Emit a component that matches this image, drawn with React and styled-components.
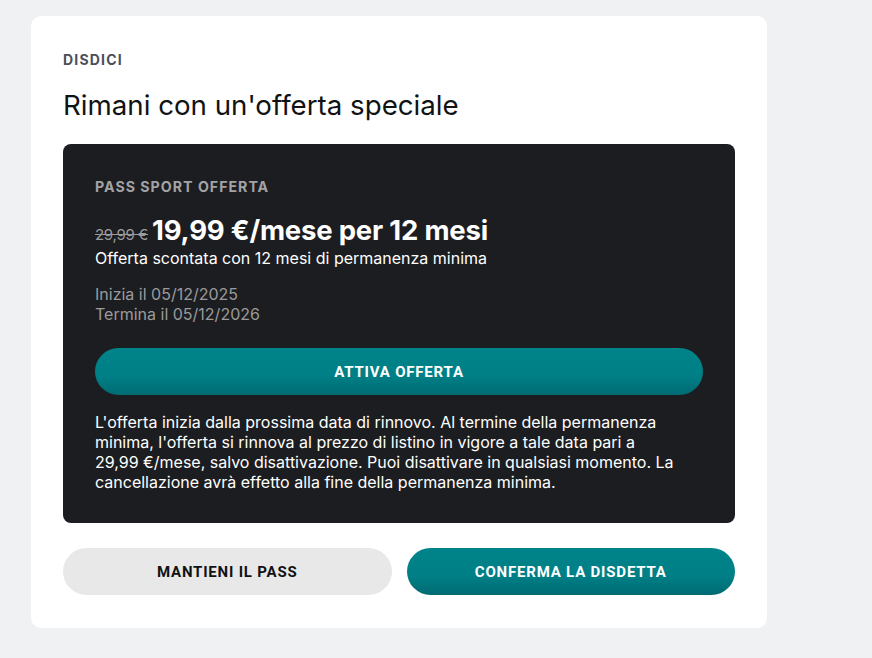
import React from "react";
import styled, { createGlobalStyle } from "styled-components";

const GlobalStyle = createGlobalStyle`
  html, body {
    margin: 0;
    padding: 0;
    background: #f0f1f3;
    font-family: Inter, "Noto Sans", Roboto, sans-serif;
  }
`;

const App = () => {
    return (
        <>
            <GlobalStyle />
            <StPage>
                <StCard>
                    <StEyebrow>DISDICI</StEyebrow>
                    <StTitle>Rimani con un'offerta speciale</StTitle>

                    <StOfferBox>
                        <StOfferLabel>PASS SPORT OFFERTA</StOfferLabel>
                        <StPriceRow>
                            <StOldPrice>29,99 €</StOldPrice>
                            <StNewPrice>19,99 €/mese per 12 mesi</StNewPrice>
                        </StPriceRow>
                        <StSubtitle>Offerta scontata con 12 mesi di permanenza minima</StSubtitle>

                        <StDates>
                            <div>Inizia il 05/12/2025</div>
                            <div>Termina il 05/12/2026</div>
                        </StDates>

                        <StBtn>ATTIVA OFFERTA</StBtn>

                        <StNote>
                            L'offerta inizia dalla prossima data di rinnovo. Al termine della permanenza
                            minima, l'offerta si rinnova al prezzo di listino in vigore a tale data pari a{" "}
                            <StNoWrap>29,99 €/mese,</StNoWrap> salvo disattivazione. Puoi disattivare in qualsiasi momento. La
                            cancellazione avrà effetto alla fine della permanenza minima.
                        </StNote>
                    </StOfferBox>

                    <StBtnRow>
                        <StBtn $variant="grey">MANTIENI IL PASS</StBtn>
                        <StBtn>CONFERMA LA DISDETTA</StBtn>
                    </StBtnRow>
                </StCard>
            </StPage>
        </>
    );
};

export default App;

// pagina
const StPage = styled.div`
  padding: 16px 31px;
  min-height: 658px;
  box-sizing: border-box;
`;

// card bianca
const StCard = styled.div`
  width: 736px;
  box-sizing: border-box;
  background: #ffffff;
  border-radius: 10px;
  padding: 36px 32px 33px;
`;

const StEyebrow = styled.div`
  font-size: 14px;
  font-weight: 700;
  letter-spacing: 1.2px;
  color: #4a4f59;
  line-height: 16px;
`;

const StTitle = styled.h1`
  margin: 20px 0 0;
  font-size: 27.7px;
  font-weight: 400;
  color: #111214;
  line-height: 34px;
`;

// box scuro dell'offerta
const StOfferBox = styled.div`
  margin-top: 22px;
  background: #1c1d20;
  border-radius: 8px;
  padding: 35px 32px 31px;
  color: #ffffff;
`;

const StOfferLabel = styled.div`
  font-size: 14.2px;
  font-weight: 700;
  letter-spacing: 1px;
  color: #a3a3a5;
  line-height: 16px;
`;

const StPriceRow = styled.div`
  display: flex;
  align-items: baseline;
  gap: 4px;
  margin-top: 19px;
  height: 32px;
`;

const StOldPrice = styled.span`
  font-size: 15px;
  color: #9c9c9e;
  text-decoration: line-through;
  letter-spacing: -0.3px;
`;

const StNewPrice = styled.span`
  font-size: 27.5px;
  font-weight: 700;
  line-height: 32px;
  letter-spacing: -0.2px;
`;

const StSubtitle = styled.div`
  font-size: 16px;
  line-height: 20px;
  margin-top: 2px;
`;

const StDates = styled.div`
  margin-top: 16px;
  font-size: 16px;
  line-height: 20px;
  color: #9a9a9c;
`;

// bottoni
const StBtn = styled.button`
  display: flex;
  align-items: center;
  justify-content: center;
  width: 100%;
  height: 47px;
  border: none;
  border-radius: 24px;
  font-family: Roboto, "Liberation Sans", sans-serif;
  font-size: 15px;
  font-weight: 700;
  letter-spacing: 0.8px;
  cursor: pointer;
  color: ${(p) => (p.$variant === "grey" ? "#111214" : "#ffffff")};
  background: ${(p) =>
        p.$variant === "grey"
            ? "#e8e8e8"
            : "linear-gradient(180deg, #00838a 0%, #007f86 60%, #006a71 100%)"};
  ${StOfferBox} & {
    margin-top: 24px;
  }
`;

const StNote = styled.p`
  margin: 17px 0 0;
  font-size: 16px;
  line-height: 20px;
`;

const StNoWrap = styled.span`
  white-space: nowrap;
`;

const StBtnRow = styled.div`
  display: grid;
  grid-template-columns: 1fr 1fr;
  gap: 15px;
  margin-top: 25px;
`;
